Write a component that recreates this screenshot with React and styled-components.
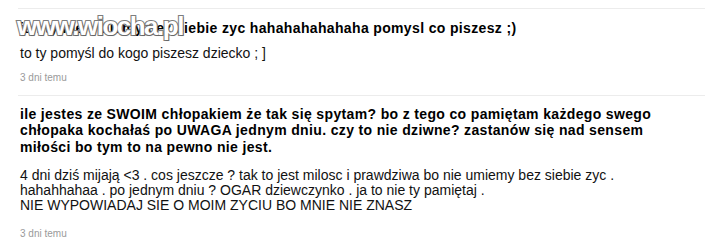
import React from "react";
import styled, { createGlobalStyle } from "styled-components";

const Global = createGlobalStyle`
  html, body { margin: 0; padding: 0; background: #fff; }
  body { font-family: "Liberation Sans", Arial, sans-serif; color: #111; }
`;

const Page = styled.div`
  position: relative;
  width: 724px;
  height: 243px;
  overflow: hidden;
  padding: 8px 19px 0 18px;
  box-sizing: border-box;
`;

const Comment = styled.div`
  border-top: 1px solid #ececec;
  padding: ${(p) => p.$pad} 0 11px 2px;
`;

const Quote = styled.p`
  margin: 0 0 ${(p) => p.$after};
  font-weight: bold;
  font-size: 14px;
  letter-spacing: 0.35px;
  line-height: 16.5px;
  color: #000;
`;

const Reply = styled.div`
  font-size: 14px;
  line-height: ${(p) => p.$lh || "16px"};
  color: #111;
`;

const Date = styled.div`
  margin-top: ${(p) => p.$top};
  font-size: 10px;
  line-height: 12px;
  color: #9a9a9a;
`;

const Watermark = styled.div`
  position: absolute;
  left: 17px;
  top: 12px;
  font-family: "Liberation Sans", Arial, sans-serif;
  font-weight: bold;
  font-size: 26px;
  line-height: 29px;
  letter-spacing: -1.5px;
  color: #fff;
  -webkit-text-stroke: 2.2px #7d7d7d;
  paint-order: stroke fill;
  text-shadow: 1px 1px 1px rgba(0, 0, 0, 0.2);
`;

export default function App() {
  return (
    <>
      <Global />
      <Page>
        <Comment $pad="11px">
          <Quote $after="8px">
            ja i ty nie umiemy bez siebie zyc hahahahahahaha pomysl co piszesz ;)
          </Quote>
          <Reply>to ty pomyśl do kogo piszesz dziecko ; ]</Reply>
          <Date $top="11px">3 dni temu</Date>
        </Comment>
        <Comment $pad="10px">
          <Quote $after="12.5px">
            ile jestes ze SWOIM chłopakiem że tak się spytam? bo z tego co pamiętam każdego swego
            <br />
            chłopaka kochałaś po UWAGA jednym dniu. czy to nie dziwne? zastanów się nad sensem
            <br />
            miłości bo tym to na pewno nie jest.
          </Quote>
          <Reply $lh="15px">
            4 dni dziś mijają &lt;3 . cos jeszcze ? tak to jest milosc i prawdziwa bo nie umiemy bez siebie zyc .
            <br />
            hahahhahaa . po jednym dniu ? OGAR dziewczynko . ja to nie ty pamiętaj .
            <br />
            NIE WYPOWIADAJ SIE O MOIM ZYCIU BO MNIE NIE ZNASZ
          </Reply>
          <Date $top="15px">3 dni temu</Date>
        </Comment>
        <Watermark>www.wiocha.pl</Watermark>
      </Page>
    </>
  );
}
